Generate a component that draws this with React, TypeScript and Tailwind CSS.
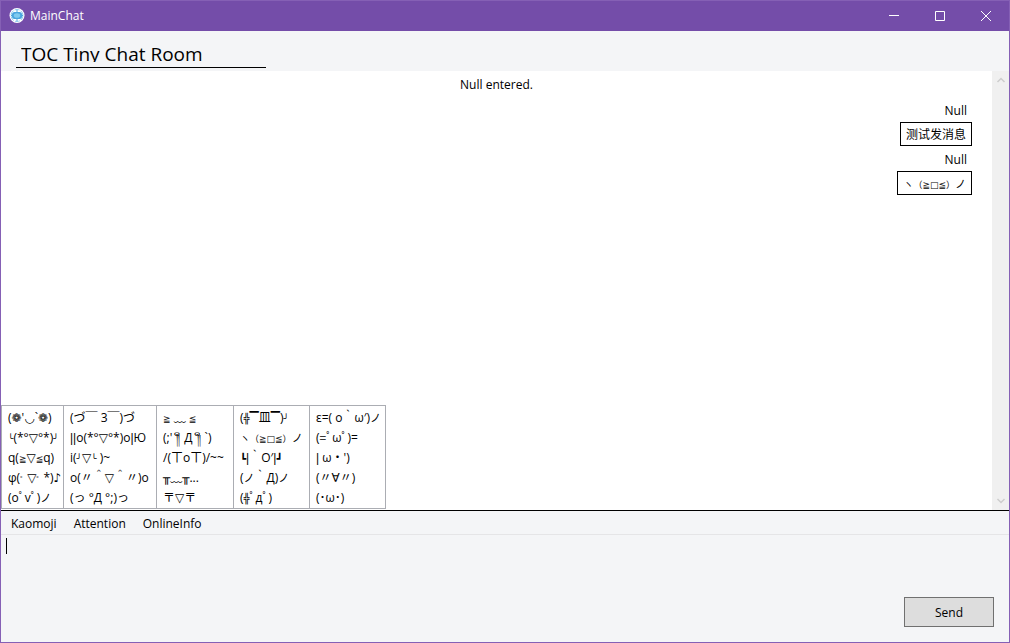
import React, { useState } from 'react';

const kaomoji = [
  ["(❁'◡`❁)", '╰(*°▽°*)╯', 'q(≧▽≦q)', 'φ(゜▽゜*)♪', '(oﾟvﾟ)ノ'],
  ['(づ￣ 3￣)づ', '||o(*°▽°*)o|Ю', 'i(╯▽╰ )~', 'o(〃＾▽＾〃)o', '(っ °Д °;)っ'],
  ['≧ ﹏ ≦', "(;'༎ຶД༎ຶ`)", '/(ㄒoㄒ)/~~', '╥﹏╥...', '〒▽〒'],
  ['(╬▔皿▔)╯', 'ヽ（≧□≦）ノ', '┗|｀O′|┛', '(ノ｀Д)ノ', '(╬ﾟдﾟ)'],
  ['ε=( o｀ω′)ノ', '(=ﾟωﾟ)=', "| ω・')", '(〃∀〃)', '(･ω･)'],
];

const columnWidths = ['w-[62px]', 'w-[93px]', 'w-[77px]', 'w-[76px]', 'w-[76px]'];

const messages = [
  { user: 'Null', text: '测试发消息' },
  { user: 'Null', text: 'ヽ（≧□≦）ノ' },
];

// symbols whose fallback glyphs come out too wide next to the latin text
const symbolStyles: [RegExp, string][] = [
  [/[≧≦□]/, "text-[9px] leading-none font-['DejaVu_Sans']"],
  [/[╰╯]/, 'text-[9px] leading-none'],
  [/゜/, 'text-[7px] leading-none'],
  [/༎ຶ/, 'inline-block px-1 text-[10px] leading-none'],
  [/[（）]/, 'text-[9px] leading-none'],
  [/[ヽ╬┗┛]/, 'text-[10px] leading-none'],
  [/ノ/, 'text-[11px] leading-none'],
  [/\|/, "leading-none font-['Liberation_Sans']"],
];

function Face({ text }: { text: string }) {
  return (
    <>
      {text.split(/([≧≦□]+|[╰╯]|゜|༎ຶ|[（）]|[ヽ╬┗┛]|ノ|\|+)/).map((part, i) => {
        const style = symbolStyles.find(([pattern]) => pattern.test(part));
        return style ? <span key={i} className={style[1]}>{part}</span> : part;
      })}
    </>
  );
}

function AppIcon() {
  return (
    <svg className="h-4 w-4" viewBox="0 0 16 16" fill="none">
      <circle cx="8" cy="7.500" r="7.500" fill="#fff" />
      <circle cx="8" cy="7.500" r="6" stroke="#8fcbee" strokeWidth="1" strokeDasharray="5 1.300" />
      <rect x="3" y="4" width="10" height="7" rx="2.500" fill="#4aa5df" />
      <path d="M8 2v2M8 11v2M2 7.500h2M12 7.500h2" stroke="#4aa5df" />
      <ellipse cx="8" cy="7.500" rx="3.200" ry="2.300" fill="#80cbef" />
    </svg>
  );
}

function TitleBar() {
  return (
    <header className="flex h-[30px] shrink-0 items-center bg-[#744da9] text-white">
      <div className="flex flex-1 items-center gap-[5px] pl-2">
        <AppIcon />
        <span>MainChat</span>
      </div>
      <button aria-label="Minimize" className="flex h-full w-[46px] items-center justify-center">
        <svg className="h-[10px] w-[10px]" viewBox="0 0 10 10" stroke="#fff">
          <path d="M0 4.500h10" />
        </svg>
      </button>
      <button aria-label="Maximize" className="flex h-full w-[46px] items-center justify-center">
        <svg className="h-[10px] w-[10px]" viewBox="0 0 10 10" stroke="#fff" fill="none">
          <path d="M.5.5h9v9h-9z" />
        </svg>
      </button>
      <button aria-label="Close" className="flex h-full w-[46px] items-center justify-center">
        <svg className="h-[10px] w-[10px]" viewBox="0 0 10 10" stroke="#fff">
          <path d="M0 0l10 10M10 0L0 10" />
        </svg>
      </button>
    </header>
  );
}

function ScrollBar() {
  return (
    <div className="flex w-[17px] shrink-0 flex-col items-center justify-between bg-[#f0f0f0] py-1">
      <svg className="h-[10px] w-[10px]" viewBox="0 0 10 10" stroke="#cdcdcd" strokeWidth="1.5" fill="none">
        <path d="M1.500 7L5 3.500 8.500 7" />
      </svg>
      <svg className="h-[10px] w-[10px]" viewBox="0 0 10 10" stroke="#cdcdcd" strokeWidth="1.5" fill="none">
        <path d="M1.500 3L5 6.500 8.500 3" />
      </svg>
    </div>
  );
}

export default function App() {
  const [title, setTitle] = useState('TOC Tiny Chat Room');
  const [draft, setDraft] = useState('');
  const [showKaomoji, setShowKaomoji] = useState(true);

  return (
    <div className="flex h-screen flex-col border border-[#8560b5] bg-[#f4f5f7] font-['Open_Sans','DejaVu_Sans','Noto_Sans_CJK_SC',sans-serif] text-[12px] leading-4 text-black">
      <TitleBar />

      <div className="h-10 shrink-0 pt-[11px] pl-[15px]">
        <div className="w-[250px] border-b border-black pb-[5px] pl-[5px]">
          <input
            aria-label="Room name"
            className="block h-5 w-full pt-1 text-[19px] leading-[24px] outline-none"
            value={title}
            onChange={(e) => setTitle(e.target.value)}
          />
        </div>
      </div>

      <main className="relative flex min-h-0 flex-1 border-b border-black bg-white">
        <div className="flex-1 pt-1.5">
          <p className="text-center">Null entered.</p>
          <div className="flex flex-col gap-1.5 pt-2.5 pr-5">
            {messages.map((message, i) => (
              <div key={i} className="flex flex-col items-end gap-[3px]">
                <span className="pr-[5px]">{message.user}</span>
                <p className="h-6 border border-black px-[5px] py-1">
                  <Face text={message.text} />
                </p>
              </div>
            ))}
          </div>
        </div>
        <ScrollBar />

        {showKaomoji && (
          <div className="absolute bottom-px left-0 flex border-y border-l border-[#abadb3] bg-white">
            {kaomoji.map((column, i) => (
              <ul key={i} className={`border-r border-[#abadb3] py-px ${columnWidths[i]}`}>
                {column.map((face) => (
                  <li key={face} className="h-5">
                    <button
                      className="block h-5 w-full pt-px pl-1.5 text-left whitespace-pre"
                      onClick={() => setDraft(draft + face)}
                    >
                      <Face text={face} />
                    </button>
                  </li>
                ))}
              </ul>
            ))}
          </div>
        )}
      </main>

      <nav className="flex h-6 shrink-0 items-center gap-[17px] border-b border-[#e5e5e7] pt-0.5 pl-2.5">
        <button onClick={() => setShowKaomoji(!showKaomoji)}>Kaomoji</button>
        <button>Attention</button>
        <button>OnlineInfo</button>
      </nav>

      <div className="relative flex h-[107px] shrink-0">
        <textarea
          aria-label="Message"
          className="flex-1 resize-none px-[5px] py-[3px] caret-transparent outline-none"
          value={draft}
          onChange={(e) => setDraft(e.target.value)}
        />
        {draft === '' && <span className="absolute top-[3px] left-[5px] h-4 w-px bg-black" />}
        <button className="mr-[15px] mb-[15px] h-[30px] w-[90px] self-end border border-[#707070] bg-[#dddddd] pt-0.5">
          Send
        </button>
      </div>
    </div>
  );
}
